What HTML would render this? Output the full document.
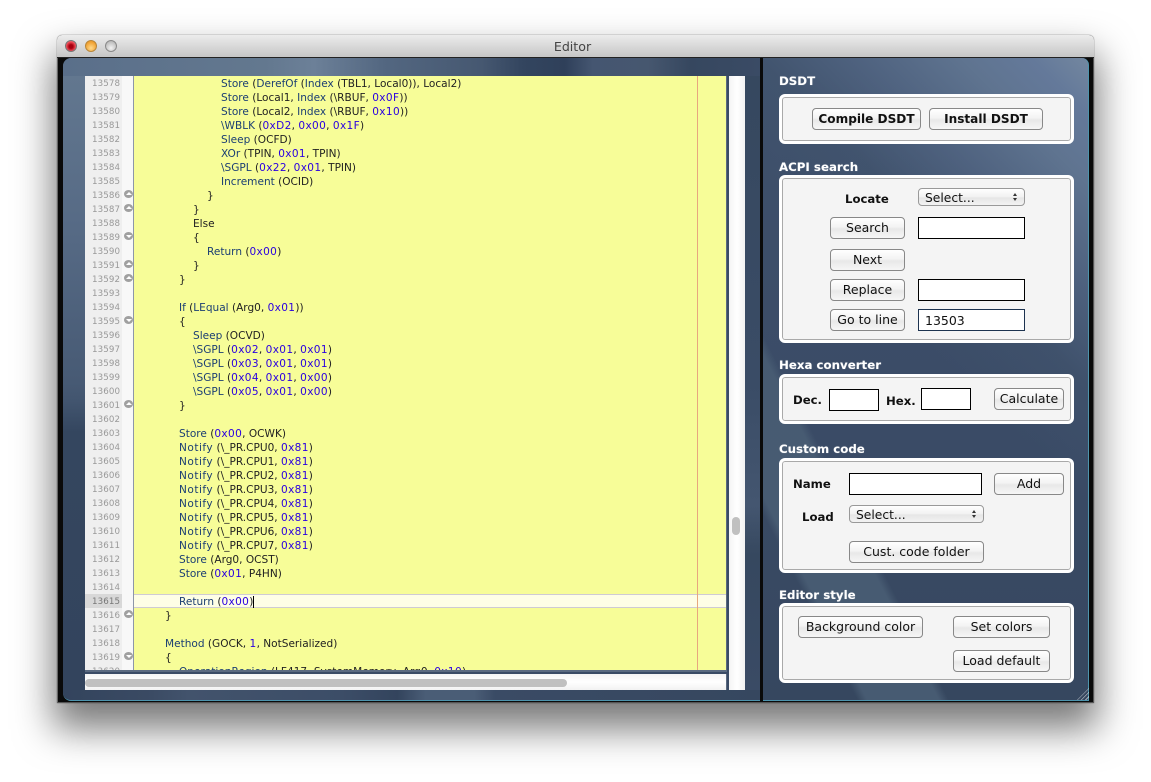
<!DOCTYPE html>
<html><head><meta charset="utf-8"><style>
html,body{margin:0;padding:0;background:#fff}
body{width:1151px;height:782px;overflow:hidden;position:relative;font-family:"DejaVu Sans","Liberation Sans",sans-serif}
div,span{box-sizing:border-box}
.a{position:absolute}
#win{left:57px;top:35px;width:1037px;height:668px;background:#0a0a0a;box-shadow:0 22px 38px 4px rgba(0,0,0,.52),0 0 1px #555;border-radius:5px 5px 0 0;border-left:1px solid #666;border-right:1px solid #555;border-bottom:1px solid #555}
#tb{left:57px;top:35px;width:1037px;height:23px;padding-right:6px;background:linear-gradient(#ececec,#c6c6c6);border-radius:5px 5px 0 0;border-bottom:1px solid #222;text-align:center;font-size:12.6px;line-height:23px;color:#444}
.tl{width:12px;height:12px;border-radius:50%;top:40px;border:1px solid #777}
.pane{top:58px;height:643px;border-bottom:1px solid #4d94ad;overflow:hidden}
#pl{left:63px;width:697px;border-radius:8px 0 0 8px;background:#3a4b65}
#pr{left:763px;width:326px;border-radius:0 7px 0 0;border-right:1px solid #4d94ad;background:
linear-gradient(225deg,#73879f 0,#64799a 6%,#5f7490 13%,rgba(85,105,135,.7) 24%,rgba(70,90,115,.35) 34%,rgba(60,78,105,0) 46%),
linear-gradient(63deg,rgba(72,92,115,0) 14.5%,rgba(72,92,115,.95) 16%,rgba(72,92,115,.95) 27%,rgba(72,92,115,0) 28.5%),
linear-gradient(180deg,#3f516c,#3a4b66 60%,#36475f)}
#ed{left:85px;top:76px;width:642px;height:596px;background:#f7fd98;overflow:hidden;border-bottom:2px solid #5a6a80;border-right:1px solid #5a6a80}
#gut{left:0;top:0;width:49px;height:596px;background:#f8f8f8;border-right:1px solid #8d96a8}
#gn{left:0;top:0;width:37px;height:596px;background:#efefef}
.n{position:absolute;left:7px;width:30px;height:14px;line-height:14px;font-size:8.7px;color:#999;letter-spacing:.1px;margin-top:1px}
.f{position:absolute;left:39px;width:9px;height:8px;border-radius:50%;background:#a0a0a0}
.f:after{content:"";position:absolute;left:1.5px;border-left:3px solid transparent;border-right:3px solid transparent}
.u:after{top:2px;border-bottom:3px solid #fff}
.d:after{top:3px;border-top:3px solid #fff}
#code{left:49px;top:1px;width:593px}
#code div{height:14px;line-height:14px;font-size:10.55px;color:#222;white-space:pre}
#code b{font-weight:normal;color:#1c3f73}
#code i{font-style:normal;color:#2a00e0;letter-spacing:.35px}
#code b.w{letter-spacing:.5px}
.p0{padding-left:31px}.p1{padding-left:45px}.p2{padding-left:59px}.p3{padding-left:73px}.p4{padding-left:87px}
#cur{left:49px;top:518px;width:593px;height:14px;background:#fefee6;border-top:1px solid #cfcbd3;border-bottom:1px solid #cfcbd3}
#mg{left:612px;top:0;width:1px;height:596px;background:#e8a77e}
.h{left:779px;color:#fff;font-weight:bold;font-size:11.8px;line-height:14px;text-shadow:0 0 1px rgba(255,255,255,.4)}
.box{left:779px;width:295px;background:#f4f4f4;border:3px solid #fff;border-radius:6px;box-shadow:inset 0 0 0 1px #a9a9a9}
.b{height:22px;line-height:20px;text-align:center;font-size:12.5px;color:#111;background:linear-gradient(#fff,#f3f3f3 45%,#e8e8e8 55%,#f6f6f6);border:1px solid #888;border-radius:4px}
.i{height:22px;background:#fff;border:1px solid #000;font-size:12.5px;line-height:21px;padding-left:6px;color:#111}
.s{height:18px;line-height:18px;font-size:12.3px;color:#111;padding-left:6px;background:linear-gradient(#fff,#f1f1f1 50%,#e6e6e6 55%,#f2f2f2);border:1px solid #999;border-radius:4px}
.ar{position:absolute;right:7px;width:0;height:0;border-left:2.5px solid transparent;border-right:2.5px solid transparent}
.l{font-size:11.7px;font-weight:bold;color:#111;line-height:14px}
</style></head><body>
<div class="a" id="win"></div>
<div class="a" id="tb">Editor</div>
<div class="a tl" style="left:65px;background:radial-gradient(circle at 50% 55%,#a80010 0 25%,#ee4a55 60%,#f5a0a0)"></div>
<div class="a tl" style="left:85px;background:radial-gradient(circle at 50% 70%,#ffd98a,#f0a030 70%,#e89a30);border-color:#b8863a"></div>
<div class="a tl" style="left:105px;background:radial-gradient(circle at 50% 70%,#f2f2f2,#b8b8b8 80%);border-color:#8a8a8a"></div>

<div class="a pane" id="pl">
<div class="a" style="left:0;top:0;width:697px;height:18px;background:linear-gradient(90deg,#5a6f8a 0,#63788f 29%,#6c8098 36%,#536781 46%,#465871 60%,#33455f 66%,#2f405a 72%,#455671 76%,#46576f 84%,#36475f 90%,#3a4b65 100%)"></div>
<div class="a" style="left:0;top:18px;width:22px;height:614px;background:linear-gradient(180deg,#62778f 0,#566a85 25%,#475a74 50%,#42556f 53%,#34465f 58%,#33445d 100%)"></div>
<div class="a" style="left:682px;top:18px;width:15px;height:614px;background:linear-gradient(180deg,#36485f 0,#3a4c66 50%,#445670 70%,#36485f 78%,#3a4b65 100%)"></div>
<div class="a" style="left:0;top:632px;width:697px;height:10px;background:linear-gradient(90deg,#33445d 0,#3a4a63 12%,#42536c 18%,#3c4d67 40%,#33445d 48%,#4a5d76 52%,#4a5d76 59%,#3a4b65 62%,#36475f 100%)"></div>
</div>
<div class="a pane" id="pr"></div>
<div class="a" style="left:1077px;top:688px;width:12px;height:12px;background:repeating-linear-gradient(135deg,transparent 0 2px,rgba(255,255,255,.55) 2px 3px);clip-path:polygon(100% 0,100% 100%,0 100%)"></div>

<div class="a" id="ed">
<div class="a" id="gut"></div><div class="a" id="gn"></div>
<div class="a" style="left:0;top:518px;width:37px;height:14px;background:#d8d8d8"></div>
<div class="a" id="cur"></div><div class="a" id="mg"></div>
<span class="n" style="top:0">13578</span><span class="n" style="top:14px">13579</span><span class="n" style="top:28px">13580</span><span class="n" style="top:42px">13581</span><span class="n" style="top:56px">13582</span><span class="n" style="top:70px">13583</span><span class="n" style="top:84px">13584</span><span class="n" style="top:98px">13585</span><span class="n" style="top:112px">13586</span><span class="n" style="top:126px">13587</span><span class="n" style="top:140px">13588</span><span class="n" style="top:154px">13589</span><span class="n" style="top:168px">13590</span><span class="n" style="top:182px">13591</span><span class="n" style="top:196px">13592</span><span class="n" style="top:210px">13593</span><span class="n" style="top:224px">13594</span><span class="n" style="top:238px">13595</span><span class="n" style="top:252px">13596</span><span class="n" style="top:266px">13597</span><span class="n" style="top:280px">13598</span><span class="n" style="top:294px">13599</span><span class="n" style="top:308px">13600</span><span class="n" style="top:322px">13601</span><span class="n" style="top:336px">13602</span><span class="n" style="top:350px">13603</span><span class="n" style="top:364px">13604</span><span class="n" style="top:378px">13605</span><span class="n" style="top:392px">13606</span><span class="n" style="top:406px">13607</span><span class="n" style="top:420px">13608</span><span class="n" style="top:434px">13609</span><span class="n" style="top:448px">13610</span><span class="n" style="top:462px">13611</span><span class="n" style="top:476px">13612</span><span class="n" style="top:490px">13613</span><span class="n" style="top:504px">13614</span><span class="n" style="top:518px;color:#777">13615</span><span class="n" style="top:532px">13616</span><span class="n" style="top:546px">13617</span><span class="n" style="top:560px">13618</span><span class="n" style="top:574px">13619</span><span class="n" style="top:588px">13620</span>
<span class="f u" style="top:114px"></span><span class="f u" style="top:128px"></span><span class="f d" style="top:156px"></span><span class="f u" style="top:184px"></span><span class="f u" style="top:198px"></span><span class="f d" style="top:240px"></span><span class="f u" style="top:324px"></span><span class="f u" style="top:534px"></span><span class="f d" style="top:576px"></span>
<div class="a" id="code">
<div class="p4"><b>Store</b> (<b>DerefOf</b> (<b>Index</b> (TBL1, Local0)), Local2)</div>
<div class="p4"><b>Store</b> (Local1, <b>Index</b> (\RBUF, <i>0x0F</i>))</div>
<div class="p4"><b>Store</b> (Local2, <b>Index</b> (\RBUF, <i>0x10</i>))</div>
<div class="p4"><b>\WBLK</b> (<i>0xD2</i>, <i>0x00</i>, <i>0x1F</i>)</div>
<div class="p4"><b>Sleep</b> (OCFD)</div>
<div class="p4"><b>XOr</b> (TPIN, <i>0x01</i>, TPIN)</div>
<div class="p4"><b>\SGPL</b> (<i>0x22</i>, <i>0x01</i>, TPIN)</div>
<div class="p4"><b>Increment</b> (OCID)</div>
<div class="p3">}</div>
<div class="p2">}</div>
<div class="p2">Else</div>
<div class="p2">{</div>
<div class="p3"><b>Return</b> (<i>0x00</i>)</div>
<div class="p2">}</div>
<div class="p1">}</div>
<div></div>
<div class="p1"><b>If</b> (<b>LEqual</b> (Arg0, <i>0x01</i>))</div>
<div class="p1">{</div>
<div class="p2"><b>Sleep</b> (OCVD)</div>
<div class="p2"><b>\SGPL</b> (<i>0x02</i>, <i>0x01</i>, <i>0x01</i>)</div>
<div class="p2"><b>\SGPL</b> (<i>0x03</i>, <i>0x01</i>, <i>0x01</i>)</div>
<div class="p2"><b>\SGPL</b> (<i>0x04</i>, <i>0x01</i>, <i>0x00</i>)</div>
<div class="p2"><b>\SGPL</b> (<i>0x05</i>, <i>0x01</i>, <i>0x00</i>)</div>
<div class="p1">}</div>
<div></div>
<div class="p1"><b>Store</b> (<i>0x00</i>, OCWK)</div>
<div class="p1"><b class="w">Notify</b> (\_PR.CPU0, <i>0x81</i>)</div>
<div class="p1"><b class="w">Notify</b> (\_PR.CPU1, <i>0x81</i>)</div>
<div class="p1"><b class="w">Notify</b> (\_PR.CPU2, <i>0x81</i>)</div>
<div class="p1"><b class="w">Notify</b> (\_PR.CPU3, <i>0x81</i>)</div>
<div class="p1"><b class="w">Notify</b> (\_PR.CPU4, <i>0x81</i>)</div>
<div class="p1"><b class="w">Notify</b> (\_PR.CPU5, <i>0x81</i>)</div>
<div class="p1"><b class="w">Notify</b> (\_PR.CPU6, <i>0x81</i>)</div>
<div class="p1"><b class="w">Notify</b> (\_PR.CPU7, <i>0x81</i>)</div>
<div class="p1"><b>Store</b> (Arg0, OCST)</div>
<div class="p1"><b>Store</b> (<i>0x01</i>, P4HN)</div>
<div></div>
<div class="p1"><b>Return</b> (<i>0x00</i>)<span style="border-left:1px solid #000"></span></div>
<div class="p0">}</div>
<div></div>
<div class="p0"><b>Method</b> (GOCK, <i>1</i>, NotSerialized)</div>
<div class="p0">{</div>
<div class="p1"><b>OperationRegion</b> (LF417, SystemMemory, Arg0, <i>0x10</i>)</div>
</div>
</div>
<div class="a" style="left:729px;top:76px;width:16px;height:614px;background:linear-gradient(90deg,#f4f4f4,#fff 50%,#f2f2f2)"></div>
<div class="a" style="left:732px;top:517px;width:8px;height:18px;border-radius:4px;background:#c0c0c0"></div>
<div class="a" style="left:85px;top:674px;width:642px;height:16px;background:linear-gradient(#f4f4f4,#fff 50%,#f2f2f2);border-right:1px solid #5a6a80"></div>
<div class="a" style="left:85px;top:679px;width:482px;height:8px;border-radius:4px;background:#c0c0c0"></div>

<div class="a h" style="top:74px">DSDT</div>
<div class="a box" style="top:94px;height:50px"></div>
<div class="a b" style="left:812px;top:108px;width:109px;font-weight:bold;font-size:12.1px">Compile DSDT</div>
<div class="a b" style="left:929px;top:108px;width:114px;font-weight:bold;font-size:12.1px">Install DSDT</div>

<div class="a h" style="top:159px;margin-top:1px">ACPI search</div>
<div class="a box" style="top:175px;height:168px"></div>
<div class="a l" style="left:845px;top:192px">Locate</div>
<div class="a s" style="left:918px;top:188px;width:107px">Select...<span class="ar" style="top:4px;border-bottom:3px solid #333"></span><span class="ar" style="top:9px;border-top:3px solid #333"></span></div>
<div class="a b" style="left:830px;top:217px;width:75px">Search</div>
<div class="a i" style="left:918px;top:217px;width:107px"></div>
<div class="a b" style="left:830px;top:249px;width:75px">Next</div>
<div class="a b" style="left:830px;top:279px;width:75px">Replace</div>
<div class="a i" style="left:918px;top:279px;width:107px"></div>
<div class="a b" style="left:830px;top:309px;width:75px">Go to line</div>
<div class="a i" style="left:918px;top:309px;width:107px;border-color:#1d3350">13503</div>

<div class="a h" style="top:358px">Hexa converter</div>
<div class="a box" style="top:374px;height:50px"></div>
<div class="a l" style="left:793px;top:393px">Dec.</div>
<div class="a i" style="left:829px;top:389px;width:50px"></div>
<div class="a l" style="left:886px;top:394px">Hex.</div>
<div class="a i" style="left:921px;top:388px;width:50px"></div>
<div class="a b" style="left:994px;top:388px;width:70px">Calculate</div>

<div class="a h" style="top:442px">Custom code</div>
<div class="a box" style="top:458px;height:115px"></div>
<div class="a l" style="left:793px;top:477px">Name</div>
<div class="a i" style="left:849px;top:473px;width:133px"></div>
<div class="a b" style="left:994px;top:473px;width:70px">Add</div>
<div class="a l" style="left:802px;top:510px">Load</div>
<div class="a s" style="left:849px;top:505px;width:135px">Select...<span class="ar" style="top:4px;border-bottom:3px solid #333"></span><span class="ar" style="top:9px;border-top:3px solid #333"></span></div>
<div class="a b" style="left:849px;top:541px;width:135px">Cust. code folder</div>

<div class="a h" style="top:588px">Editor style</div>
<div class="a box" style="top:603px;height:80px"></div>
<div class="a b" style="left:798px;top:616px;width:125px">Background color</div>
<div class="a b" style="left:953px;top:616px;width:97px">Set colors</div>
<div class="a b" style="left:953px;top:650px;width:97px">Load default</div>
</body></html>
